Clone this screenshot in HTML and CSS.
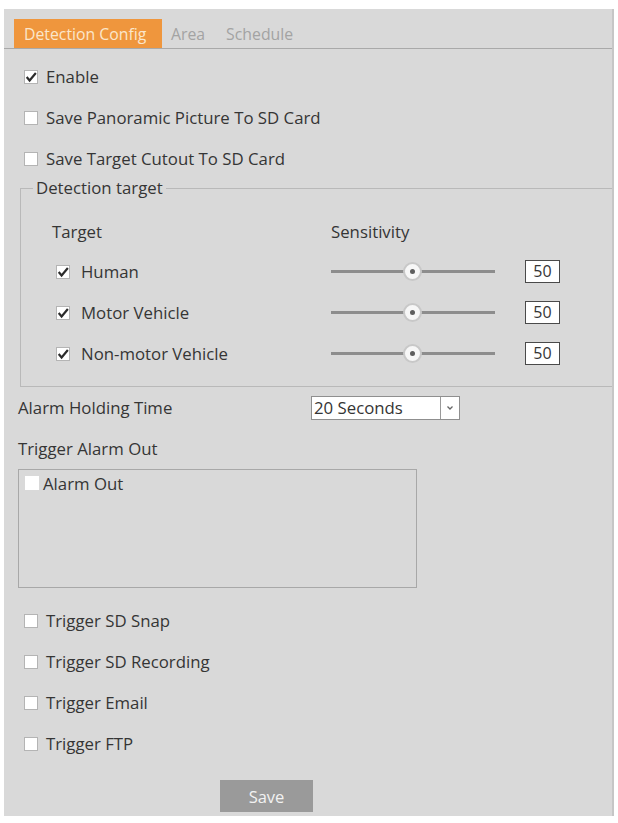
FILE: index.html
```html
<!DOCTYPE html>
<html>
<head>
<meta charset="utf-8">
<link rel="stylesheet" href="styles.css">
</head>
<body>
<div class="panel">
  <div class="tabs">
    <div class="tab active">Detection Config</div>
    <div class="tab">Area</div>
    <div class="tab">Schedule</div>
  </div>
  <div class="content">
    <div class="row check-row"><span class="cb checked"><svg viewBox="0 0 13 13"><polyline points="2.5,6.5 5.2,9.8 11,2.8" /></svg></span><span>Enable</span></div>
    <div class="row check-row"><span class="cb"></span><span>Save Panoramic Picture To SD Card</span></div>
    <div class="row check-row"><span class="cb"></span><span>Save Target Cutout To SD Card</span></div>

    <fieldset class="targets">
      <legend>Detection target</legend>
      <div class="tgrid">
        <div class="thead">Target</div>
        <div class="thead">Sensitivity</div>
        <div></div>

        <div class="tname"><span class="cb checked"><svg viewBox="0 0 13 13"><polyline points="2.5,6.5 5.2,9.8 11,2.8" /></svg></span><span>Human</span></div>
        <div class="slider"><span class="thumb"></span></div>
        <div class="num">50</div>

        <div class="tname"><span class="cb checked"><svg viewBox="0 0 13 13"><polyline points="2.5,6.5 5.2,9.8 11,2.8" /></svg></span><span>Motor Vehicle</span></div>
        <div class="slider"><span class="thumb"></span></div>
        <div class="num">50</div>

        <div class="tname"><span class="cb checked"><svg viewBox="0 0 13 13"><polyline points="2.5,6.5 5.2,9.8 11,2.8" /></svg></span><span>Non-motor Vehicle</span></div>
        <div class="slider"><span class="thumb"></span></div>
        <div class="num">50</div>
      </div>
    </fieldset>

    <div class="row label-row">
      <span class="lbl">Alarm Holding Time</span>
      <div class="select"><span class="sel-text">20 Seconds</span><span class="sel-arrow"><svg viewBox="0 0 8 6"><polyline points="1.5,1.5 4,4 6.5,1.5"/></svg></span></div>
    </div>
    <div class="row label-row"><span class="lbl">Trigger Alarm Out</span></div>
    <div class="alarm-box">
      <div class="alarm-item"><span class="cb plain"></span><span>Alarm Out</span></div>
    </div>

    <div class="triggers">
      <div class="row check-row"><span class="cb"></span><span>Trigger SD Snap</span></div>
      <div class="row check-row"><span class="cb"></span><span>Trigger SD Recording</span></div>
      <div class="row check-row"><span class="cb"></span><span>Trigger Email</span></div>
      <div class="row check-row"><span class="cb"></span><span>Trigger FTP</span></div>
    </div>

    <div class="actions"><button class="save">Save</button></div>
  </div>
</div>
</body>
</html>
```

FILE: styles.css
```css
html, body {
  margin: 0;
  padding: 0;
  background: #ffffff;
}
body {
  font-family: "Open Sans", "Noto Sans", sans-serif;
  color: #353535;
  font-size: 16.8px;
}
.panel {
  margin: 9px 0 0 4px;
  width: 610px;
  height: 807px;
  background: #d9d9d9;
  border-right: 2px solid #c6c6c6;
  box-sizing: border-box;
  overflow: hidden;
}
.tabs {
  height: 40px;
  border-bottom: 1px solid #a9a9a9;
  display: flex;
  align-items: flex-end;
  padding-left: 10px;
  box-sizing: border-box;
}
.tab {
  height: 29px;
  line-height: 31px;
  font-size: 15.8px;
  color: #a3a3a3;
  padding: 0 11px 0 10px;
}
.tab.active {
  background: #ef963d;
  color: #fbe6cb;
  width: 148px;
  box-sizing: border-box;
  padding-left: 10px;
  padding-right: 0;
  margin-right: -1px;
  white-space: nowrap;
}
.content {
  padding: 7px 0 0 14px;
}
.row {
  height: 41px;
  display: flex;
  align-items: center;
}
.check-row {
  padding-left: 6px;
}
.cb {
  width: 14px;
  height: 14px;
  background: #ffffff;
  border: 1px solid #b4b4b4;
  box-sizing: border-box;
  margin-right: 8px;
  flex: none;
  display: inline-flex;
}
.cb svg {
  width: 14px;
  height: 14px;
  margin: -1px;
}
.cb polyline {
  fill: none;
  stroke: #2b2b2b;
  stroke-width: 2;
}
.targets {
  margin: 0 0 0 2px;
  padding: 16px 0 12px 0;
  border: 1px solid #b9b9b9;
  border-right: none;
  min-width: 0;
  width: 620px;
  box-sizing: border-box;
}
.targets legend {
  padding: 0 3px;
  margin-left: 12px;
  line-height: 18px;
}
.tgrid {
  display: grid;
  grid-template-columns: 279px 194px 60px;
  grid-template-rows: 38px 41px 41px 41px;
  align-items: center;
  padding-left: 31px;
}
.thead {
  height: 38px;
  line-height: 38px;
}
.tname {
  display: flex;
  align-items: center;
  padding-left: 4px;
}
.tname .cb {
  margin-right: 11px;
}
.slider {
  position: relative;
  width: 164px;
  height: 3px;
  background: #8d8d8d;
}
.thumb {
  position: absolute;
  left: 72px;
  top: -8px;
  width: 19px;
  height: 19px;
  box-sizing: border-box;
  border-radius: 50%;
  background: #f7f7f7;
  border: 2px solid #c8c8c8;
}
.thumb::after {
  content: "";
  position: absolute;
  left: 5px;
  top: 5px;
  width: 5px;
  height: 5px;
  border-radius: 50%;
  background: #5e5e5e;
}
.num {
  width: 35px;
  height: 23px;
  box-sizing: border-box;
  border: 1px solid #4a4a4a;
  background: #ffffff;
  line-height: 21px;
  text-align: center;
  font-size: 16px;
}
.label-row .lbl {
  width: 293px;
}
.select {
  width: 149px;
  height: 24px;
  box-sizing: border-box;
  border: 1px solid #8f8f8f;
  background: #ffffff;
  display: flex;
}
.sel-text {
  flex: 1;
  padding-left: 2px;
  line-height: 22px;
}
.sel-arrow {
  width: 18px;
  border-left: 1px solid #9a9a9a;
  display: flex;
  align-items: center;
  justify-content: center;
}
.sel-arrow svg {
  width: 8px;
  height: 6px;
}
.sel-arrow polyline {
  fill: none;
  stroke: #666;
  stroke-width: 1.3;
}
.alarm-box {
  width: 399px;
  height: 119px;
  box-sizing: border-box;
  border: 1px solid #a8a8a8;
  margin-left: 0;
  padding: 6px 0 0 6px;
}
.alarm-item {
  display: flex;
  align-items: center;
  height: 14px;
}
.alarm-item .cb {
  border: none;
  margin-right: 4px;
}
.triggers {
  margin-top: 12px;
}
.actions {
  padding: 16px 0 0 202px;
}
.save {
  width: 93px;
  height: 32px;
  border: none;
  background: #9a9a9a;
  color: #f2f2f2;
  font-family: "Open Sans", "Noto Sans", sans-serif;
  font-size: 16.5px;
  padding: 0;
}
```
